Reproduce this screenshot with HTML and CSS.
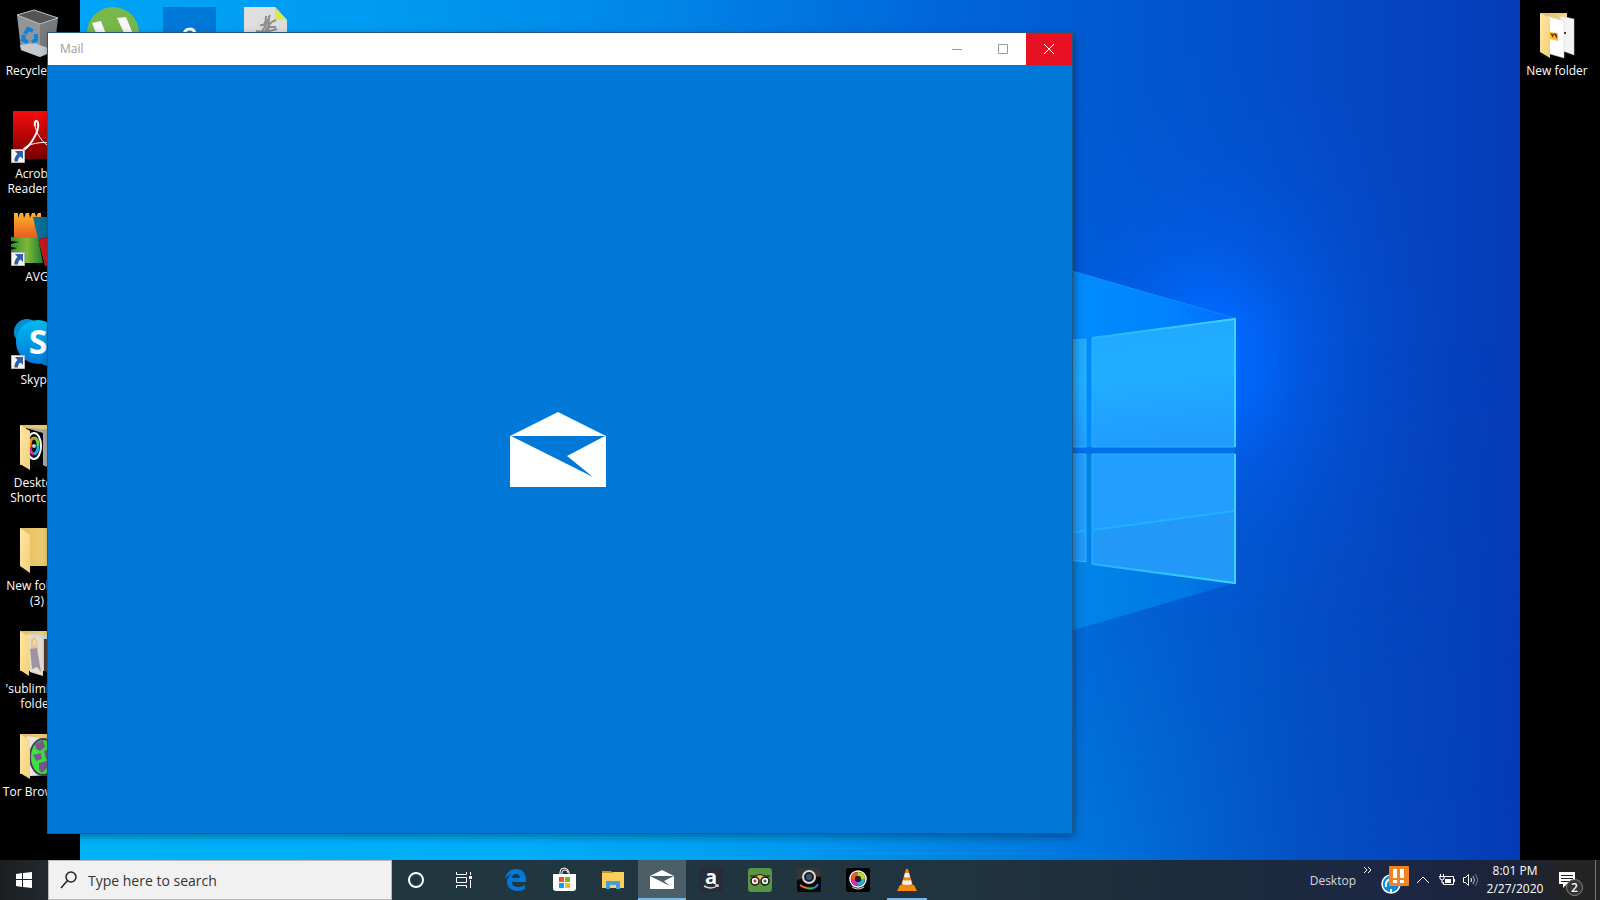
FILE: index.html
```html
<!DOCTYPE html>
<html lang="en">
<head>
<meta charset="utf-8">
<title>Desktop</title>
<link rel="stylesheet" href="styles.css">
</head>
<body>
<svg class="defs" aria-hidden="true">
  <defs>
    <linearGradient id="flap" x1="0" x2="1" y2="1"><stop offset="0" stop-color="#ffe9a8"/><stop offset="1" stop-color="#f3cf73"/></linearGradient>
    <linearGradient id="back" x1="0" x2="1"><stop offset="0" stop-color="#e2bd5e"/><stop offset="1" stop-color="#f3d57c"/></linearGradient>
    <symbol id="shortcut" viewBox="0 0 14 14"><path fill="#f4f4f4" stroke="#b8b8b8" d="M.5.5h13v13H.5z"/><path fill="#2c5fa8" d="M4 2h8v8L9.500 7.500C7.500 9 7 10 7 12.500H3.500C3 9.500 4.500 7 6.500 5z"/></symbol>
    <symbol id="envelope" viewBox="0 0 96 75"><path fill="#fff" fill-rule="evenodd" d="M48 0 96 24V75H0V24zM1 24 83 65 57 44 95 24z"/></symbol>
  </defs>
</svg>

<main class="desktop">
  <svg class="wallpaper" viewBox="0 0 1600 860" preserveAspectRatio="none" aria-hidden="true">
    <defs>
      <linearGradient id="sky" x1="80" x2="1520" y1="0" y2="0" gradientUnits="userSpaceOnUse">
        <stop offset="0" stop-color="#00a4f8"/><stop offset=".2" stop-color="#009bf2"/><stop offset=".4" stop-color="#0085e8"/><stop offset=".6" stop-color="#0066da"/><stop offset=".7" stop-color="#005bd2"/><stop offset=".85" stop-color="#044bc8"/><stop offset="1" stop-color="#053cb9"/>
      </linearGradient>
      <linearGradient id="floor" x1="80" x2="1520" y1="0" y2="0" gradientUnits="userSpaceOnUse">
        <stop offset="0" stop-color="#00b2f8"/><stop offset=".3" stop-color="#00aef8"/><stop offset=".5" stop-color="#009aef"/><stop offset=".7" stop-color="#0074db"/><stop offset=".85" stop-color="#0450c4"/><stop offset="1" stop-color="#043bb7"/>
      </linearGradient>
      <linearGradient id="fade" x2="0" y2="1"><stop offset=".4" stop-color="#000"/><stop offset="1" stop-color="#fff"/></linearGradient>
      <mask id="low"><path fill="url(#fade)" d="M80 0h1440v860H80z"/></mask>
      <radialGradient id="glow" cx="1210" cy="360" r="310" gradientUnits="userSpaceOnUse" gradientTransform="translate(242 0) scale(.8 1)">
        <stop offset="0" stop-color="#006cff"/><stop offset=".2" stop-color="#0068ff" stop-opacity=".85"/><stop offset=".4" stop-color="#0062f4" stop-opacity=".45"/><stop offset=".7" stop-color="#005ce6" stop-opacity=".15"/><stop offset="1" stop-color="#0058e0" stop-opacity="0"/>
      </radialGradient>
      <linearGradient id="beamTop" x1="1072" x2="1235" y1="0" y2="0" gradientUnits="userSpaceOnUse"><stop offset="0" stop-color="#008cfa"/><stop offset=".55" stop-color="#0084ff"/><stop offset="1" stop-color="#006cff"/></linearGradient>
      <linearGradient id="beamLow" x1="1072" x2="1235" y1="0" y2="0" gradientUnits="userSpaceOnUse"><stop offset="0" stop-color="#0085e8"/><stop offset=".7" stop-color="#0078e6"/><stop offset="1" stop-color="#0064de"/></linearGradient>
      <linearGradient id="pane" x1="0" x2=".15" y2="1"><stop offset="0" stop-color="#20a8ff"/><stop offset=".5" stop-color="#20aeff"/><stop offset="1" stop-color="#209cff"/></linearGradient>
      <linearGradient id="edge" x1="1092" x2="1235" y1="0" y2="0" gradientUnits="userSpaceOnUse"><stop offset="0" stop-color="#2aaeff"/><stop offset="1" stop-color="#38d6ff"/></linearGradient>
    </defs>
    <path fill="url(#sky)" d="M80 0h1440v860H80z"/>
    <path fill="url(#floor)" mask="url(#low)" d="M80 0h1440v860H80z"/>
    <path fill="url(#glow)" d="M900 0h620v760h-620z"/>
    <path fill="url(#beamTop)" d="M1060 267 1235 318 1235 450H1060z"/>
    <path fill="url(#beamLow)" d="M1060 450H1235V583L1060 634z"/>
    <path stroke="#1598ff" opacity=".6" d="M1060 268 1235 318"/>
    <path fill="#0070ec" d="M1060 447h175v7h-175z"/>
    <path fill="url(#pane)" stroke="#2cb4ff" d="M1060 341 1086 339V447H1060zM1092 338 1235 319V447H1092z"/>
    <path fill="#219eff" stroke="#2cb4ff" d="M1060 454H1086V562L1060 559zM1092 454H1235V583L1092 564z"/>
    <path fill="#2298f8" d="M1060 535 1085 532V561L1060 558zM1093 530 1234 511V582L1093 563z"/>
    <path fill="none" stroke="#22b8ff" stroke-width="2" opacity=".8" d="M1060 534 1085 531M1093 530 1234 511"/>
    <path fill="none" stroke="url(#edge)" stroke-width="2" d="M1092 338 1235 319V447M1235 454V583L1092 564"/>
  </svg>

  <ul class="icons">
    <li><svg viewBox="0 0 54 54"><path fill="#929699" d="M7 9 30 18V51L11 44z"/><path fill="#777b7f" d="M30 18 48 12 44 46 30 51z"/><path fill="#c3c8cf" d="M10 39 24 37 44 44 30 51 11 44z"/><path fill="#555" stroke="#bfc2c4" d="M7 9 24 4 48 12 30 18z"/><g fill="none" stroke="#0d83da" stroke-width="4"><path d="M15 28l3-5 5 2M26 28l0 6-4 2M18 36l-5-2 1-5"/></g></svg><span>Recycle Bin</span></li>
    <li><svg viewBox="0 0 54 54"><defs><linearGradient id="red" x2="0" y2="1"><stop stop-color="#f70d0d"/><stop offset="1" stop-color="#760000"/></linearGradient></defs><path fill="url(#red)" d="M3 2h48v48H3z"/><path fill="none" stroke="#fff" stroke-width="2" d="M13 41C19 39 30 22 28 14c-1-4-4-2-3 3"/><path fill="none" stroke="#fff" d="M25 17c2 10 11 22 20 22 4 0 3-4-4-5-11-2-27 2-28 7"/></svg><svg class="badge"><use href="#shortcut"/></svg><span>Acrobat<br>Reader DC</span></li>
    <li><svg viewBox="0 0 54 54"><defs><linearGradient id="orange" x2="0" y2="1"><stop stop-color="#ffb42e"/><stop offset="1" stop-color="#e85a1c"/></linearGradient><linearGradient id="green" x2="1"><stop stop-color="#328f32"/><stop offset=".5" stop-color="#7cba38"/><stop offset="1" stop-color="#1c7c30"/></linearGradient></defs><path fill="url(#orange)" d="M4 1h4v5l2-5h3l1 5 2-5h3l1 5 2-5h3l1 4 2-4h3v25H4z"/><path fill="#087098" d="M23 5h28v18l-23 4z"/><path fill="#c11a20" d="M28 27 51 23v30h-4v-3h-2v4h-4v-4h-2v4h-4z"/><path fill="url(#green)" d="M1 25 28 26 33 51H1V38l6-2-6-1v-3l8-2-8-1z"/></svg><svg class="badge"><use href="#shortcut"/></svg><span>AVG</span></li>
    <li><svg viewBox="0 0 54 54"><defs><linearGradient id="skype" x2="0" y2="1"><stop stop-color="#00bbf2"/><stop offset="1" stop-color="#0078d7"/></linearGradient></defs><circle cx="17" cy="17" r="13" fill="#0090d6"/><circle cx="39" cy="38" r="13" fill="#007ad4"/><circle cx="28" cy="27" r="22" fill="url(#skype)"/><text class="letter" x="28" y="39" font-size="34">S</text></svg><svg class="badge"><use href="#shortcut"/></svg><span>Skype</span></li>
    <li><svg viewBox="0 0 54 54"><path fill="url(#back)" d="M10 7h34v40H10z"/><path fill="#aaa" d="M19 10l25 2v38l-10-2z"/><path fill="#050505" d="M16 10l17 5v37l-14-3z"/><g fill="none"><ellipse cx="24" cy="28" rx="7" ry="13" stroke="#fff" stroke-width="2"/><path stroke="#ff8b1a" stroke-width="3" d="M20 29q0-9 4-9"/><path stroke="#6dd33c" stroke-width="3" d="M24 20q4 0 4 8"/><path stroke="#24a9dc" stroke-width="3" d="M28 28q0 7-4 8"/><path stroke="#e12b9c" stroke-width="3" d="M24 36q-4-1-4-7"/></g><circle cx="24" cy="28" r="2" fill="#ccc"/><path fill="url(#flap)" d="M10 7 20 13V52L10 46z"/></svg><span>Desktop<br>Shortcuts</span></li>
    <li><svg viewBox="0 0 54 54"><path fill="url(#back)" d="M10 7h34v38H10z"/><path fill="url(#flap)" d="M10 7 20 14V52L10 45z"/></svg><span>New folder<br>(3)</span></li>
    <li><svg viewBox="0 0 54 54"><path fill="url(#back)" d="M10 7h34v40H10z"/><path fill="#e5ddd0" d="M17 10 33 14V52l-13-4z"/><path fill="#cdd7de" d="M17 9l27 3v4l-11-1z"/><path fill="#4d3b35" d="M34 15h10v35l-10-3z"/><path fill="#e7c391" d="M21 16q3-6 6 0l1 10-7 1z"/><path fill="#a093a4" d="M20 25l7-1 4 24-4-5-5 2z"/><path fill="#f1d2bc" d="M23 16h3v5h-3z"/><path fill="url(#flap)" d="M10 7 19 13V52L10 46z"/></svg><span>'subliminal'<br>folder</span></li>
    <li><svg viewBox="0 0 54 54"><path fill="url(#back)" d="M10 7h34v40H10z"/><path fill="#e8e8e8" d="M17 9l27 5v34l-24 1z"/><ellipse cx="33" cy="30" rx="13" ry="18" fill="#39e63c" stroke="#4b3c55" stroke-width="2"/><path fill="#7f568f" d="M25 17l8-4 2 7-5 4-4-2zM23 28l8-2 1 6-6 2zM29 36l8-2 1 6-6 6-3-3zM34 24l8-3v10l-6 1z"/><path fill="url(#flap)" d="M10 7 20 13V52L10 46z"/></svg><span>Tor Browser</span></li>
  </ul>
  <ul class="icons">
    <li><svg viewBox="0 0 54 54"><circle cx="27" cy="27" r="26" fill="#78b74a"/><path fill="#f7f7f7" d="M6 17l9-2 9 24h-9zM31 12l9-1 9 22h-8z"/></svg></li>
  </ul>
  <ul class="icons">
    <li><svg viewBox="0 0 54 54"><path fill="#0078d7" d="M1 1h53v53H1z"/><path fill="none" stroke="#fff" stroke-width="3" d="M22 28q1-5 6-5t5 6h-8"/></svg></li>
  </ul>
  <ul class="icons">
    <li><svg viewBox="0 0 54 54"><path fill="#dedede" d="M6 1h31l12 13v40H6z"/><path fill="#d9e84b" d="M37 1 49 14H37z"/><path fill="none" stroke="#8d8d8d" stroke-width="2" d="M18 25q10 2 21-2M22 19q6 2 6-9M19 32q8-9 13-23M31 10l-1 20M26 31q2-14 12-17M31 21h7"/></svg></li>
  </ul>
  <ul class="icons icons-right">
    <li><svg viewBox="0 0 54 54"><path fill="url(#back)" d="M10 7h27v38H10z"/><path fill="#f4f4f4" stroke="#ccc" stroke-width=".5" d="M30 10l14 3v36l-11-4z"/><path fill="#fff" stroke="#ccc" stroke-width=".5" d="M17 10l17 5v37l-14-4z"/><path fill="#ffc21a" d="M20 26l8 1v8l-8-2z"/><path fill="#7d2514" d="M20 27l3 5 1-4 3 5v-4l-2-2-2 1zM34 26h2v2h-2z"/><path fill="url(#flap)" d="M10 7 20 12V52L10 46z"/></svg><span>New folder</span></li>
  </ul>

  <section class="window" aria-label="Mail">
    <header class="titlebar">
      <h1>Mail</h1>
      <button type="button" aria-label="Minimize"><svg viewBox="0 0 10 10"><path d="M0 5.500h10"/></svg></button>
      <button type="button" aria-label="Maximize"><svg viewBox="0 0 10 10"><path d="M.5.5h9v9h-9z"/></svg></button>
      <button type="button" class="close" aria-label="Close"><svg viewBox="0 0 10 10"><path d="M0 0l10 10M10 0 0 10"/></svg></button>
    </header>
    <div class="splash"><svg><use href="#envelope"/></svg></div>
  </section>
</main>

<footer class="taskbar">
  <button type="button" class="start" aria-label="Start"><svg width="16" height="16" viewBox="0 0 16 16"><path fill="#fff" d="M0 2 6 1V7H0zM7 1 16 0V7H7zM0 8H6V15L0 14zM7 8H16V16L7 15z"/></svg></button>
  <label class="search"><svg width="18" height="18" viewBox="0 0 18 18"><circle cx="11" cy="6" r="5"/><path d="M7.500 9.500 1 17"/></svg><input type="text" placeholder="Type here to search" aria-label="Search"></label>
  <nav class="system">
    <button type="button" aria-label="Cortana"><svg width="16" height="16" viewBox="0 0 16 16"><circle cx="8" cy="8" r="7" fill="none" stroke="#fff" stroke-width="2"/></svg></button>
    <button type="button" aria-label="Task View"><svg width="16" height="16" viewBox="0 0 16 16"><path fill="none" stroke="#fff" d="M.5 0v2.500h10V0M.5 5.500h10v5H.5zM.5 16v-2.500h10V16M14.500 0v3M14.500 8v8"/><path fill="#fff" d="M13 4h3v3h-3z"/></svg></button>
  </nav>
  <nav class="apps">
    <button type="button" aria-label="Edge"><svg viewBox="0 0 24 24"><path fill="#0078d7" d="M2 11C3 4 8 1 13 1c6 0 10 4 10 10v3H9c0 4 3 5 6 5s5-1 7-2v4c-2 1-5 2-8 2-6 0-10-4-10-9 0-4 2-6 5-8-3 1-5 2-7 5zM9 10h8c0-3-2-4-4-4s-4 1-4 4z"/></svg></button>
    <button type="button" aria-label="Store"><svg viewBox="0 0 24 24"><path fill="none" stroke="#fff" d="M8 6V4q0-4 4-4t5 4v2M10 6V4q0-2 3-2t3 3"/><path fill="#fff" d="M1 6h23v14q0 3-3 3H4q-3 0-3-3z"/><path fill="#f25022" d="M7 9h5v5H7z"/><path fill="#7fba00" d="M13 9h5v5h-5z"/><path fill="#00a4ef" d="M7 15h5v5H7z"/><path fill="#ffb900" d="M13 15h5v5h-5z"/></svg></button>
    <button type="button" aria-label="File Explorer"><svg viewBox="0 0 24 24"><path fill="#d99100" d="M1 3h9l1 2H1z"/><path fill="#f9cf59" d="M1 5h9l2-1h11v16H1z"/><path fill="#429fd9" d="M5 13h14v8h-4v-4H9v4H5z"/></svg></button>
    <button type="button" class="active" aria-label="Mail"><svg viewBox="0 0 24 24"><path fill="#fff" fill-rule="evenodd" d="M12 2 24 8V21H0V8zM0 8 20 18 14 13 24 8z"/></svg></button>
    <button type="button" aria-label="Amazon"><svg viewBox="0 0 24 24"><rect width="24" height="24" rx="2" fill="#282c37"/><text class="letter" x="12" y="16" font-size="20">a</text><path fill="none" stroke="#d8d8d8" stroke-width="1.500" d="M5 18q7 4 13 0M16 17h3v2"/></svg></button>
    <button type="button" aria-label="TripAdvisor"><svg viewBox="0 0 24 24"><rect width="24" height="24" rx="3" fill="#589442"/><path fill="#f5c35b" d="M5 8q7-3 14 0l-7 6z"/><path stroke="#111" d="M2 8h4q6-3 12 0h4" fill="none"/><g fill="#fff" stroke="#111" stroke-width="1.500"><circle cx="7" cy="13" r="4"/><circle cx="17" cy="13" r="4"/></g><circle cx="7" cy="13" r="1.500" fill="#d22"/><circle cx="17" cy="13" r="1.500" fill="#286b30"/></svg></button>
    <button type="button" aria-label="Camera"><svg viewBox="0 0 24 24"><rect width="24" height="24" rx="2" fill="#080808"/><path fill="#353535" d="M0 0h24v9q-12-2-24 3z"/><circle cx="12" cy="9" r="6" fill="#17212b" stroke="#d8d8d8" stroke-width="2"/><circle cx="12" cy="9" r="3" fill="#405361"/><path fill="none" stroke="#f36b1c" stroke-width="2" d="M3 17q4 3 7 3"/><path fill="none" stroke="#38be42" stroke-width="2" d="M10 20q4 1 6 0"/><path fill="none" stroke="#2585df" stroke-width="2" d="M16 20q4-1 5-4"/></svg></button>
    <button type="button" aria-label="Photo effects"><svg viewBox="0 0 24 24"><rect width="24" height="24" rx="2" fill="#000"/><circle cx="12" cy="11" r="8" fill="none" stroke="#fff" stroke-width="1.500"/><g fill="none" stroke-width="4"><path stroke="#f45a22" d="M7 11q0-5 5-5"/><path stroke="#b9db2b" d="M12 6q5 0 5 5"/><path stroke="#25a9df" d="M17 11q0 5-5 5"/><path stroke="#d62fba" d="M12 16q-5 0-5-5"/></g><circle cx="12" cy="11" r="3" fill="#222"/><path fill="none" stroke="#ddd" d="M6 19q6 4 12 0"/></svg></button>
    <button type="button" class="running" aria-label="VLC"><svg viewBox="0 0 24 24"><path fill="#f58b0a" d="M5 17h14l3 6H2z"/><path fill="#f28712" d="M11 1h2l5 17q-6 4-12 0z"/><path fill="#eee" d="M10 5h4l1 4q-3 1-6 0zM8 12q4 1 8 0l1 4q-5 2-10 0z"/></svg></button>
  </nav>
  <div class="tray">
    <span class="toolbar">Desktop</span>
    <button type="button" class="more" aria-label="More"><svg width="8" height="6" viewBox="0 0 8 6"><path d="M0 0l3 3-3 3M4 0l3 3-3 3"/></svg></button>
    <button type="button" class="alert" aria-label="Update status"><svg width="28" height="28" viewBox="0 0 28 28"><circle cx="10" cy="18" r="9" fill="#0b8bd4" stroke="#fff" stroke-width="1.500"/><path fill="none" stroke="#fff" stroke-width="2" d="M5 21q-1-6 4-8M10 23v3"/><rect x="8" width="20" height="20" rx="1" fill="#f58220"/><path fill="#fff" d="M12 3h4v9h-4zM19 3h4v9h-4zM12 14h4v3h-4zM19 14h4v3h-4z"/></svg></button>
    <button type="button" class="chevron" aria-label="Show hidden icons"><svg width="12" height="8" viewBox="0 0 12 8"><path d="M0 7l6-6 6 6"/></svg></button>
    <button type="button" class="battery" aria-label="Battery"><svg width="16" height="12" viewBox="0 0 16 12"><path d="M6 2.500h8.500v8H4.500V8M1.500 0v2M4.500 0v2M0 2.500h6M1 3v2q2 2 4 0V3M3 6v3h2M15.500 5v3"/><path fill="#fff" stroke="none" d="M6 5h6v4H6z"/></svg></button>
    <button type="button" class="volume" aria-label="Volume"><svg width="16" height="14" viewBox="0 0 16 14"><path d="M.5 4.500h2l3-3v11l-3-3h-2zM8 5q1 2 0 4"/><path opacity=".7" d="M10 3q3 4 0 8"/><path opacity=".4" d="M12 1q5 6 0 12"/></svg></button>
    <time class="clock">8:01 PM<br>2/27/2020</time>
    <button type="button" class="notes" aria-label="Notifications"><svg width="16" height="16" viewBox="0 0 16 16"><path fill="#fff" stroke="none" d="M0 0h16v12H8l-4 4v-4H0z"/><path stroke="#222" d="M2 3.500h12M2 6.500h12M2 9.500h8"/></svg><span class="count">2</span></button>
    <button type="button" class="peek" aria-label="Show desktop"></button>
  </div>
</footer>
</body>
</html>
```

FILE: styles.css
```css
* { box-sizing: border-box; }

body {
  margin: 0;
  height: 100vh;
  display: grid;
  grid-template-rows: 1fr auto;
  overflow: hidden;
  background: #000;
  color: #fff;
  font-family: "Open Sans", "Noto Sans", sans-serif;
  font-size: 12px;
}

button {
  display: flex;
  align-items: center;
  justify-content: center;
  padding: 0;
  border: 0;
  background: none;
  color: inherit;
  font: inherit;
}

.defs { position: absolute; width: 0; height: 0; }

.letter {
  fill: #fff;
  font-family: "Open Sans", sans-serif;
  font-weight: 700;
  text-anchor: middle;
}

/* Desktop */
.desktop {
  position: relative;
  display: flex;
  min-height: 0;
  overflow: hidden;
}

.wallpaper {
  position: absolute;
  inset: 0;
  width: 100%;
  height: 100%;
}

.icons {
  position: relative;
  display: grid;
  grid-auto-rows: 103px;
  align-content: start;
  width: 76px;
  margin: 0;
  padding: 0;
  list-style: none;
}

.icons-right { margin: 0 4px 0 auto; }

.icons li {
  position: relative;
  display: flex;
  flex-direction: column;
  align-items: center;
  gap: 3px;
  padding: 6px 2px 0 0;
  font-size: 12px;
  line-height: 15px;
  text-align: center;
  white-space: nowrap;
}

.icons svg { width: 54px; height: 54px; }

.icons .badge {
  position: absolute;
  left: 11px;
  top: 46px;
  width: 14px;
  height: 14px;
}

/* Mail window */
.window {
  position: absolute;
  left: 3%;
  top: 33px;
  width: 64%;
  bottom: 27px;
  display: flex;
  flex-direction: column;
  background: #0078d7;
  box-shadow: 0 0 0 1px #24567f, 2px 3px 9px rgba(0, 0, 0, .4);
}

.titlebar {
  display: flex;
  height: 32px;
  background: #fff;
  color: #999;
}

.titlebar h1 {
  flex: 1;
  margin: 0;
  padding-left: 12px;
  font-size: 12px;
  font-weight: 400;
  line-height: 32px;
}

.titlebar button { width: 46px; }

.titlebar svg {
  width: 10px;
  height: 10px;
  overflow: visible;
  fill: none;
  stroke: #999;
}

.titlebar .close { background: #e81123; }
.titlebar .close svg { stroke: #fff; }

.splash {
  flex: 1;
  display: flex;
  align-items: center;
  justify-content: center;
  padding: 0 4px 0 0;
}

.splash svg { width: 96px; height: 75px; }

/* Taskbar */
.taskbar {
  display: flex;
  height: 40px;
  background: linear-gradient(90deg, #1d1d1f 0, #202a2f 3%, #21373f 24%, #20343f 60%, #1c2b3c 75%, #1b2744 88%, #1c2336 95%, #232323 98%);
}

.start { width: 48px; }

.search {
  display: flex;
  align-items: center;
  gap: 10px;
  width: 344px;
  padding: 0 11px;
  border: 1px solid #b9b9b9;
  background: #f1f1f1;
}

.search svg { fill: none; stroke: #222; stroke-width: 1.5; }

.search input {
  flex: 1;
  min-width: 0;
  padding: 0;
  border: 0;
  outline: 0;
  background: none;
  color: #333;
  font: 14px "Open Sans", "Noto Sans", sans-serif;
}

.search input::placeholder { color: #333; opacity: 1; }

.system { display: flex; }
.system button { width: 48px; }

.apps {
  display: flex;
  gap: 1px;
  margin-left: 3px;
}

.apps button { width: 48px; }
.apps svg { width: 24px; height: 24px; overflow: visible; }

.apps .active {
  background: #4b5f67;
  box-shadow: inset 0 -2px #76b9ed;
}

.apps .running {
  background: linear-gradient(#76b9ed, #76b9ed) center bottom / 40px 2px no-repeat;
}

.tray {
  display: flex;
  align-items: center;
  margin-left: auto;
}

.tray svg { fill: none; stroke: #fff; overflow: visible; }
.toolbar { color: #d6dbe2; }

.more {
  align-self: flex-start;
  margin: 7px 0 0 8px;
}

.alert { margin-left: 9px; }
.alert svg { stroke: none; }
.chevron { margin-left: 8px; }
.battery { margin-left: 10px; }
.volume { margin-left: 8px; }

.clock {
  width: 72px;
  font-size: 12px;
  line-height: 18px;
  text-align: center;
}

.notes {
  position: relative;
  width: 44px;
  height: 40px;
  padding-right: 12px;
}

.count {
  position: absolute;
  left: 15px;
  top: 19px;
  width: 17px;
  height: 17px;
  border: 1px solid #888;
  border-radius: 50%;
  background: #333;
  font-size: 12px;
  font-weight: 600;
  line-height: 15px;
}

.peek {
  width: 5px;
  height: 40px;
  border-left: 1px solid #777;
}
```
